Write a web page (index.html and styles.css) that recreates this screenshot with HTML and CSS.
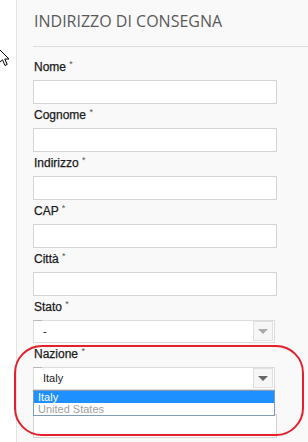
FILE: index.html
```html
<!DOCTYPE html>
<html lang="it">
<head>
    <meta charset="UTF-8">
    <meta name="viewport" content="width=device-width, initial-scale=1.0">
    <title>Indirizzo di consegna</title>
    <link rel="stylesheet" href="styles.css">
</head>
<body>
    <div class="page">
        <div class="gutter">
            <svg class="cursor" width="13" height="20" viewBox="0 0 13 20">
                <path d="M1 1 L1 15 L4.5 11.8 L7 17.5 L9.2 16.5 L6.8 11 L11 11 Z" fill="#fff" stroke="#000" stroke-width="1" stroke-linejoin="miter"/>
            </svg>
        </div>
        <div class="panel">
            <h2 class="panel-title">Indirizzo di consegna</h2>

            <div class="form-group">
                <label for="nome">Nome <span class="req">*</span></label>
                <input type="text" id="nome">
            </div>
            <div class="form-group">
                <label for="cognome">Cognome <span class="req">*</span></label>
                <input type="text" id="cognome">
            </div>
            <div class="form-group">
                <label for="indirizzo">Indirizzo <span class="req">*</span></label>
                <input type="text" id="indirizzo">
            </div>
            <div class="form-group">
                <label for="cap">CAP <span class="req">*</span></label>
                <input type="text" id="cap">
            </div>
            <div class="form-group">
                <label for="citta">Città <span class="req">*</span></label>
                <input type="text" id="citta">
            </div>
            <div class="form-group">
                <label>Stato <span class="req">*</span></label>
                <div class="select">
                    <span class="select-value">-</span>
                    <span class="select-btn"><span class="arrow"></span></span>
                </div>
            </div>
            <div class="form-group">
                <label>Nazione <span class="req">*</span></label>
                <div class="select open">
                    <span class="select-value">Italy</span>
                    <span class="select-btn"><span class="arrow dark"></span></span>
                    <ul class="options">
                        <li class="selected">Italy</li>
                        <li>United States</li>
                    </ul>
                </div>
            </div>
            <div class="form-group">
                <label class="label-empty" for="altro"></label>
                <input type="text" id="altro">
            </div>

            <div class="highlight"></div>
        </div>
    </div>
</body>
</html>
```

FILE: styles.css
```css
body {
    margin: 0;
    background-color: #ffffff;
    font-family: "Liberation Sans", Arial, sans-serif;
    color: #222;
    overflow: hidden;
}
.page {
    display: flex;
    height: 442px;
}
.gutter {
    position: relative;
    width: 16px;
    flex: none;
}
.cursor {
    position: absolute;
    left: -2px;
    top: 48px;
}
.panel {
    position: relative;
    flex: 1;
    background-color: #f9f9f9;
    border-left: 1px solid #e2e2e2;
    padding: 0 31px 0 16px;
}
.panel-title {
    margin: 0 -31px 9px 0;
    padding: 10px 0 0 1px;
    height: 47px;
    box-sizing: border-box;
    border-bottom: 1px solid #dcdcdc;
    font-family: "Open Sans", sans-serif;
    font-weight: normal;
    font-size: 16px;
    line-height: 22px;
    text-transform: uppercase;
    color: #5a5a5a;
}
.form-group label {
    display: block;
    height: 14px;
    padding: 4px 0 0 1px;
    margin-bottom: 6px;
    font-size: 12px;
    line-height: 14px;
    color: #1a1a1a;
    -webkit-text-stroke: 0.25px #1a1a1a;
}
.req {
    font-size: 9px;
    vertical-align: top;
    position: relative;
    top: -3px;
    color: #555;
    -webkit-text-stroke: 0;
}
.form-group input {
    display: block;
    width: 244px;
    height: 24px;
    box-sizing: border-box;
    margin: 0;
    border: 1px solid #d3d3d3;
    background-color: #ffffff;
}
.select {
    position: relative;
    width: 242px;
    height: 23px;
    margin-top: 1px;
    box-sizing: border-box;
    border: 1px solid #dcdcdc;
    background-color: #ffffff;
    font-size: 11px;
    line-height: 21px;
}
.select::before {
    content: "";
    position: absolute;
    left: -1px;
    top: -1px;
    width: 9px;
    height: 1px;
    background-color: #b8b8b8;
}
.select-value {
    padding-left: 9px;
}
.select-btn {
    position: absolute;
    right: 1px;
    top: 0;
    width: 20px;
    height: 20px;
    border: 1px solid #e0e0e0;
    box-sizing: border-box;
    background-color: #f6f6f6;
    display: flex;
    align-items: center;
    justify-content: center;
}
.arrow {
    width: 0;
    height: 0;
    border-left: 5px solid transparent;
    border-right: 5px solid transparent;
    border-top: 5px solid #aaaaaa;
}
.arrow.dark {
    border-top-color: #666666;
}
.options {
    position: absolute;
    left: -1px;
    top: 22px;
    width: 242px;
    margin: 0;
    padding: 0;
    list-style: none;
    box-sizing: border-box;
    border: 1px solid #7f9db9;
    background-color: #ffffff;
    font-size: 11px;
    line-height: 12px;
    z-index: 2;
}
.options li {
    padding-left: 4px;
    color: #a0a0a0;
}
.options li.selected {
    background-color: #1e90ff;
    color: #ffffff;
}
.highlight {
    position: absolute;
    left: -3px;
    top: 345px;
    width: 290px;
    height: 91px;
    box-sizing: border-box;
    border: 2px solid #e3202b;
    border-radius: 28px;
    z-index: 3;
}
```
